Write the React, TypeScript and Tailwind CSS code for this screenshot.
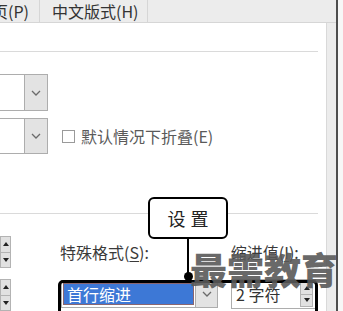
import React from "react";

const Chevron = () => (
  <svg width="10" height="6" viewBox="0 0 10 6" fill="none">
    <path d="M1 1 L5 5 L9 1" stroke="#6b6b6b" strokeWidth="1.3" />
  </svg>
);

// tiny up/down spinner pair as in Win32 numeric boxes
function SpinButtons({ className }: { className: string }) {
  return (
    <div className={`flex flex-col ${className}`}>
      <div className="flex-1 bg-[#e1e1e1] border border-[#b3b3b3] flex items-center justify-center">
        <div className="w-0 h-0 border-x-[3px] border-x-transparent border-b-[4px] border-b-[#222]" />
      </div>
      <div className="flex-1 bg-[#e1e1e1] border border-t-0 border-[#b3b3b3] flex items-center justify-center">
        <div className="w-0 h-0 border-x-[3px] border-x-transparent border-t-[4px] border-t-[#222]" />
      </div>
    </div>
  );
}

function ComboStub() {
  return (
    <div className="w-[48px] h-full flex border-y border-r border-[#adadad] bg-white">
      <div className="flex-1" />
      <div className="w-[23px] bg-[#e3e3e3] border-l border-[#adadad] flex items-center justify-center">
        <Chevron />
      </div>
    </div>
  );
}

export default function App() {
  return (
    <div className="relative w-[343px] h-[311px] overflow-hidden flex bg-white font-['Noto_Sans_CJK_SC','Noto_Sans',sans-serif] text-[16px] leading-none">
      {/* dialog body */}
      <div className="w-[336px] flex flex-col bg-[#ececec]">
        {/* tabs */}
        <div className="h-[27px] flex border-b border-[#d6d6d6] text-[#333]">
          <div className="w-[40px] shrink-0 overflow-hidden whitespace-nowrap border-r border-[#d6d6d6] flex items-center justify-end pr-[10px]">
            页(P)
          </div>
          <div className="w-[108px] shrink-0 whitespace-nowrap border-r border-[#d6d6d6] flex items-center pl-[12px]">中文版式(H)</div>
        </div>

        <div className="flex-1 flex">
          {/* tab page */}
          <div className="w-[327px] bg-white border-r border-[#d9d9d9] flex flex-col">
            <div className="mt-[28px] h-px w-[318px] bg-[#dadada]" />

            <div className="mt-[22px] h-[37px] flex">
              <ComboStub />
            </div>

            <div className="mt-[7px] h-[36px] flex items-center">
              <ComboStub />
              <div className="ml-[14px] w-[13px] h-[13px] border border-[#9a9a9a] bg-white" />
              <span className="ml-[6px] text-[#5a5a5a]">默认情况下折叠(E)</span>
            </div>

            <div className="mt-[59px] h-px w-[318px] bg-[#dadada]" />

            <div className="mt-[22px] h-[32px] flex">
              <SpinButtons className="w-[11px] h-full" />
              <div className="ml-[49px] flex items-center text-[#3a3a3a]">
                特殊格式(<span className="underline underline-offset-2">S</span>):
              </div>
              <div className="ml-[82px] flex items-center text-[#3a3a3a]">
                缩进值(<span className="underline underline-offset-2">I</span>):
              </div>
            </div>

            <div className="mt-[11px] h-[32px] flex">
              <SpinButtons className="w-[11px] h-full" />
              <div className="ml-[50px] mt-px w-[157px] h-[28px] border border-[#adadad] bg-white flex">
                <div className="ml-px mt-[2px] w-[131px] h-[22px] bg-[#3d78d6] border border-[#8a6670] text-white flex items-center pl-[3px]">
                  首行缩进
                </div>
                <div className="ml-auto w-[22px] bg-[#e3e3e3] border-l border-[#adadad] flex items-center justify-center">
                  <Chevron />
                </div>
              </div>
              <div className="ml-[13px] w-[85px] h-[30px] border border-[#adadad] bg-white flex items-center">
                <span className="pl-[4px] text-[#333]">2 字符</span>
                <SpinButtons className="ml-auto mr-[2px] w-[13px] h-[26px]" />
              </div>
            </div>
          </div>
          <div className="flex-1" />
        </div>
      </div>
      <div className="w-[2px] bg-[#4d4d4d]" />
      <div className="flex-1 bg-[#f7f7f7]" />

      {/* annotation: highlight frame */}
      <div className="absolute left-[58px] top-[280px] w-[260px] h-[40px] border-[3px] border-black rounded-[5px]" />
      {/* annotation: callout */}
      <div className="absolute left-[187px] top-[239px] w-[2px] h-[38px] bg-black" />
      <div className="absolute left-[184px] top-[272px] w-[9px] h-[9px] rounded-full bg-black" />
      <div className="absolute left-[148px] top-[197px] w-[80px] h-[42px] border-2 border-black rounded-[6px] bg-white flex items-center justify-center text-[18px] tracking-[5px] pl-[5px] text-[#222]">
        设置
      </div>

      {/* watermark */}
      <div className="absolute left-[190px] top-[251px] text-[37px] font-black leading-none text-[#595959] opacity-90">
        最需教育
      </div>
    </div>
  );
}
